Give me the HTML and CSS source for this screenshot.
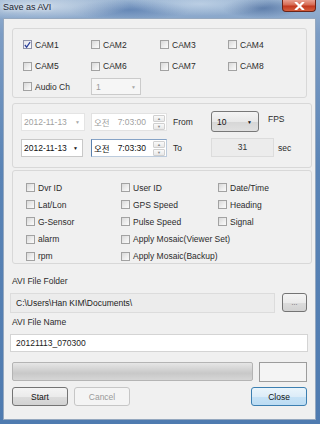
FILE: index.html
```html
<!DOCTYPE html>
<html>
<head>
<meta charset="utf-8">
<link rel="stylesheet" href="styles.css">
</head>
<body>
<div class="window">
  <div class="titlebar">
    <span class="title">Save as AVI</span>
    <span class="close"><svg width="11" height="8" viewBox="0 0 11 8"><path d="M2 0.5 L9 7.5 M9 0.5 L2 7.5" stroke="#fff" stroke-width="2.2" stroke-linecap="square"/></svg></span>
  </div>
  <div class="client">
    <div class="group g1">
      <div class="cb"><span class="box checked"><svg width="8" height="8" viewBox="0 0 8 8"><path d="M1 4 L3 6.5 L7 0.8" stroke="#2a3f9a" stroke-width="1.4" fill="none"/></svg></span>CAM1</div>
      <div class="cb"><span class="box"></span>CAM2</div>
      <div class="cb"><span class="box"></span>CAM3</div>
      <div class="cb"><span class="box"></span>CAM4</div>
      <div class="cb"><span class="box"></span>CAM5</div>
      <div class="cb"><span class="box"></span>CAM6</div>
      <div class="cb"><span class="box"></span>CAM7</div>
      <div class="cb"><span class="box"></span>CAM8</div>
      <div class="cb"><span class="box"></span>Audio Ch</div>
      <div class="combo-dis"><span>1</span><span class="arr-gray">&#9660;</span></div>
    </div>

    <div class="group g2">
      <div class="trow">
        <div class="date dis"><span>2012-11-13</span><span class="arr-gray">&#9660;</span></div>
        <div class="time dis"><span class="ko">오전</span><span class="tm">7:03:00</span><span class="spin"><i>&#9650;</i><i>&#9660;</i></span></div>
        <span class="tlabel">From</span>
        <div class="fps"><span>10</span><span class="arr">&#9660;</span></div>
        <span class="unit up">FPS</span>
      </div>
      <div class="trow">
        <div class="date act"><span>2012-11-13</span><span class="arr">&#9660;</span></div>
        <div class="time act"><span class="ko">오전</span><span class="tm">7:03:30</span><span class="spin"><i>&#9650;</i><i>&#9660;</i></span></div>
        <span class="tlabel">To</span>
        <div class="secs">31</div>
        <span class="unit">sec</span>
      </div>
    </div>

    <div class="group g3">
      <div class="cb"><span class="box"></span>Dvr ID</div>
      <div class="cb"><span class="box"></span>User ID</div>
      <div class="cb"><span class="box"></span>Date/Time</div>
      <div class="cb"><span class="box"></span>Lat/Lon</div>
      <div class="cb"><span class="box"></span>GPS Speed</div>
      <div class="cb"><span class="box"></span>Heading</div>
      <div class="cb"><span class="box"></span>G-Sensor</div>
      <div class="cb"><span class="box"></span>Pulse Speed</div>
      <div class="cb"><span class="box"></span>Signal</div>
      <div class="cb"><span class="box"></span>alarm</div>
      <div class="cb span2"><span class="box"></span>Apply Mosaic(Viewer Set)</div>
      <div class="cb"><span class="box"></span>rpm</div>
      <div class="cb span2"><span class="box"></span>Apply Mosaic(Backup)</div>
    </div>

    <div class="label l1">AVI File Folder</div>
    <div class="folder-row">
      <div class="field ro">C:\Users\Han KIM\Documents\</div>
      <div class="btn dots">...</div>
    </div>
    <div class="label l2">AVI File Name</div>
    <div class="field name">20121113_070300</div>

    <div class="prog-row">
      <div class="progress"></div>
      <div class="pbox"></div>
    </div>

    <div class="btn-row">
      <div class="btn">Start</div>
      <div class="btn disabled">Cancel</div>
      <div class="btn default">Close</div>
    </div>
  </div>
</div>
</body>
</html>
```

FILE: styles.css
```css
* { box-sizing: border-box; }
body {
  margin: 0;
  font-family: "Liberation Sans", Arial, sans-serif;
  font-size: 8.5px;
  color: #2b2b2b;
}
.window {
  width: 320px;
  height: 424px;
  padding: 0 4px 4px 3px;
  display: flex;
  flex-direction: column;
  background:
    radial-gradient(ellipse 90px 14px at 40px 6px, rgba(220,230,240,.75), rgba(220,230,240,0)),
    radial-gradient(ellipse 70px 12px at 200px 4px, rgba(210,225,240,.6), rgba(210,225,240,0)),
    radial-gradient(ellipse 60px 10px at 130px 10px, rgba(60,100,160,.5), rgba(60,100,160,0)),
    radial-gradient(ellipse 40px 10px at 262px 8px, rgba(50,85,140,.55), rgba(50,85,140,0)),
    linear-gradient(180deg, #9ab4d2 0, #7c9cc4 8%, #5a84b6 40%, #4f7bb0 100%);
}
.titlebar {
  height: 18px;
  display: flex;
  justify-content: space-between;
  align-items: flex-start;
}
.title {
  margin-top: 2px;
  font-size: 9px;
  color: #1c2430;
  text-shadow: 0 0 4px rgba(255,255,255,.9);
}
.close {
  width: 34px;
  height: 12px;
  display: flex;
  align-items: center;
  justify-content: center;
  border: 1px solid #6b2418;
  border-top: none;
  border-radius: 0 0 4px 4px;
  background: linear-gradient(180deg, #e9a091 0, #d66a52 45%, #c2381f 55%, #d5603f 100%);
}
.client {
  flex: 1;
  background: #f0f0f0;
  border: 1px solid #95a8bf;
  display: flex;
  flex-direction: column;
}
.group {
  border: 1px solid #d8d8d8;
  border-radius: 3px;
  margin-left: 8px;
}
.g1 {
  margin-top: 9px;
  width: 295px;
  height: 70px;
  padding: 5px 0 0 10px;
  display: grid;
  grid-template-columns: 68px 69px 68px 1fr;
  grid-template-rows: 21px 22px 19px;
  align-items: center;
}
.cb {
  display: flex;
  align-items: center;
  gap: 3px;
  white-space: nowrap;
}
.box {
  width: 9px;
  height: 9px;
  border: 1px solid #a2a2a2;
  background: linear-gradient(135deg, #d9d9d9 0, #efefef 60%, #fafafa 100%);
  display: flex;
  align-items: center;
  justify-content: center;
  flex: none;
}
.box.checked { background: linear-gradient(135deg, #e4e4ea, #fbfbfd); border-color: #8f92a8; }
.combo-dis {
  width: 50px;
  height: 17px;
  border: 1px solid #cbcbcb;
  background: #f6f6f6;
  color: #9a9a9a;
  display: flex;
  align-items: center;
  justify-content: space-between;
  padding: 0 4px;
}
.arr-gray { font-size: 5px; color: #a8a8a8; }
.arr { font-size: 5px; color: #111; }

.g2 {
  margin-top: 5px;
  width: 300px;
  height: 65px;
  padding: 8px 0 0 8px;
  display: flex;
  flex-direction: column;
  gap: 7px;
}
.trow {
  height: 19px;
  display: flex;
  align-items: center;
}
.date {
  height: 18px;
  display: flex;
  align-items: center;
  justify-content: space-between;
  padding: 0 4px 0 2px;
  background: #fff;
}
.date.dis { width: 64px; border: 1px solid #e4e4e4; color: #a0a0a0; }
.date.act { width: 62px; border: 1px solid #c8c8c8; color: #111; }
.time {
  width: 76px;
  height: 18px;
  display: flex;
  align-items: center;
  background: #fff;
  padding-left: 2px;
}
.date.dis + .time { margin-left: 6px; border: 1px solid #e2e2e2; color: #a0a0a0; }
.date.act + .time { margin-left: 8px; border: 1px solid #bccbdc; border-left-color: #5a80ae; border-top-color: #86a3c6; color: #111; }
.ko { font-family: "Noto Sans CJK KR", "Liberation Sans", sans-serif; font-size: 8.5px; }
.tm { margin-left: 8px; }
.spin {
  margin-left: auto;
  margin-right: 1px;
  width: 12px;
  height: 14px;
  display: flex;
  flex-direction: column;
  gap: 1px;
}
.spin i {
  flex: 1;
  font-style: normal;
  font-size: 4px;
  color: #8a8a8a;
  display: flex;
  align-items: center;
  justify-content: center;
  border: 1px solid #d0d0d0;
  border-radius: 1px;
  background: linear-gradient(180deg, #fafafa, #e8e8e8);
}
.tlabel { width: 38px; margin-left: 6px; }
.fps {
  width: 48px;
  height: 21px;
  border: 1px solid #787878;
  border-radius: 3px;
  background: linear-gradient(180deg, #f4f4f4 0, #e8e8e8 50%, #d6d6d6 51%, #e0e0e0 100%);
  display: flex;
  align-items: center;
  justify-content: space-between;
  padding: 0 6px 0 5px;
  color: #111;
}
.unit { margin-left: 9px; }
.unit.up { align-self: flex-start; margin-top: 2px; }
.secs {
  width: 63px;
  height: 19px;
  border: 1px solid #dcdcdc;
  background: #ececec;
  display: flex;
  align-items: center;
  justify-content: center;
  padding-bottom: 2px;
  color: #333;
}
.secs + .unit { margin-left: 4px; }

.g3 {
  margin-top: 2px;
  width: 300px;
  height: 94px;
  padding: 8px 0 0 13px;
  display: grid;
  grid-template-columns: 95px 97px 1fr;
  grid-auto-rows: 17.2px;
  align-items: center;
}
.span2 { grid-column: span 2; }

.label { margin-left: 8px; line-height: 12px; }
.l1 { margin-top: 11px; }
.l2 { margin-top: 3px; }
.folder-row {
  margin-top: 6px;
  margin-left: 6px;
  display: flex;
  align-items: flex-start;
  gap: 7px;
}
.field {
  display: flex;
  align-items: center;
  padding-left: 5px;
  color: #222;
}
.field.ro {
  width: 265px;
  height: 20px;
  border: 1px solid #dcdcdc;
  background: #ececec;
}
.field.name {
  margin-top: 6px;
  margin-left: 6px;
  width: 298px;
  height: 18px;
  border: 1px solid #d4d4d4;
  background: #fff;
}
.btn {
  width: 56px;
  height: 19px;
  border: 1px solid #747474;
  border-radius: 3px;
  background: linear-gradient(180deg, #f4f4f4 0, #ebebeb 50%, #dcdcdc 51%, #d2d2d2 100%);
  display: flex;
  align-items: center;
  justify-content: center;
  color: #111;
}
.btn.dots { width: 25px; height: 19px; color: #555; font-size: 7px; }
.btn.disabled {
  border-color: #c6c6c6;
  background: #f4f4f4;
  color: #9a9a9a;
}
.btn.default {
  margin-left: auto;
  border-color: #3c7fb1;
  background: linear-gradient(180deg, #eaf5fc 0, #dcecf8 50%, #c6e2f6 51%, #bcdcf3 100%);
}
.prog-row {
  margin-top: 10px;
  margin-left: 8px;
  display: flex;
  gap: 6px;
}
.progress {
  width: 241px;
  height: 19px;
  border: 1px solid #b4b4b4;
  border-radius: 2px;
  background: linear-gradient(180deg, #e6e6e6 0, #d2d2d2 40%, #c8c8c8 60%, #d6d6d6 100%);
}
.pbox {
  width: 48px;
  height: 20px;
  border: 1px solid #9c9c9c;
  background: #f4f4f4;
}
.btn-row {
  margin-top: 5px;
  margin-left: 8px;
  width: 295px;
  display: flex;
  gap: 6px;
}
```
